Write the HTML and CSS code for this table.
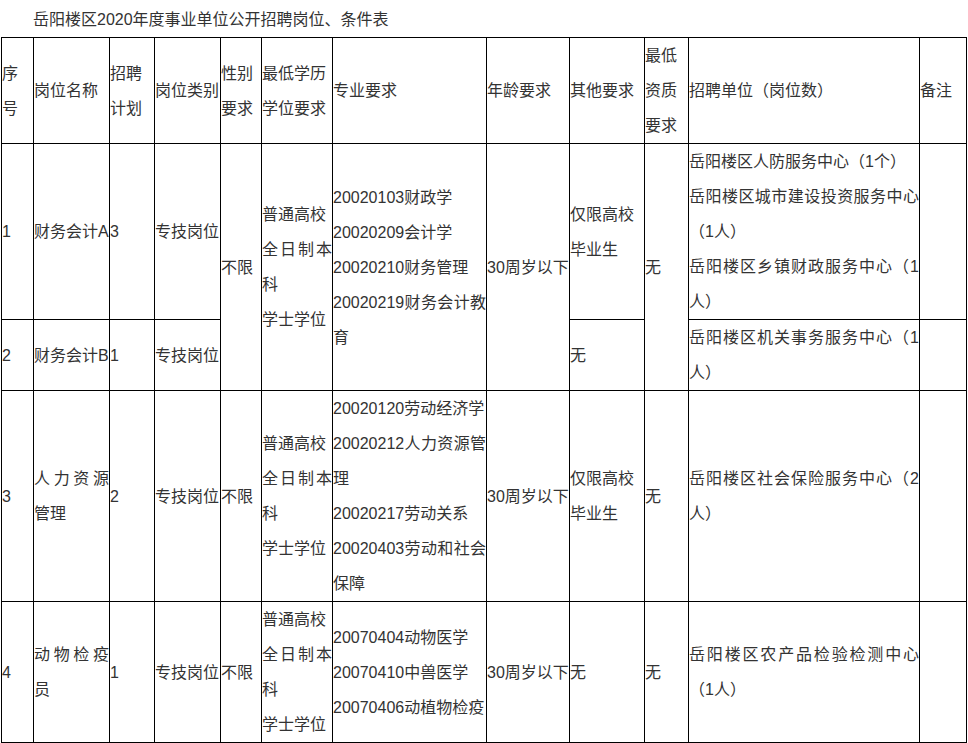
FILE: index.html
```html
<!DOCTYPE html>
<html lang="zh-CN">
<head>
<meta charset="utf-8">
<title>岳阳楼区2020年度事业单位公开招聘岗位、条件表</title>
<link rel="stylesheet" href="styles.css">
</head>
<body>
<div class="page">
  <p class="title">岳阳楼区2020年度事业单位公开招聘岗位、条件表</p>
  <table class="jobs">
    <colgroup>
      <col class="c1"><col class="c2"><col class="c3"><col class="c4"><col class="c5"><col class="c6">
      <col class="c7"><col class="c8"><col class="c9"><col class="c10"><col class="c11"><col class="c12">
    </colgroup>
    <tr>
      <td>序<br>号</td>
      <td>岗位名称</td>
      <td>招聘<br>计划</td>
      <td>岗位类别</td>
      <td>性别<br>要求</td>
      <td>最低学历<br>学位要求</td>
      <td>专业要求</td>
      <td>年龄要求</td>
      <td>其他要求</td>
      <td>最低<br>资质<br>要求</td>
      <td>招聘单位（岗位数）</td>
      <td>备注</td>
    </tr>
    <tr>
      <td>1</td>
      <td>财务会计A</td>
      <td>3</td>
      <td>专技岗位</td>
      <td rowspan="2">不限</td>
      <td rowspan="2">普通高校<br>全日制本科<br>学士学位</td>
      <td rowspan="2">20020103财政学<br>20020209会计学<br>20020210财务管理<br>20020219财务会计教育</td>
      <td rowspan="2">30周岁以下</td>
      <td>仅限高校<br>毕业生</td>
      <td rowspan="2">无</td>
      <td>岳阳楼区人防服务中心（1个）<br>岳阳楼区城市建设投资服务中心（1人）<br>岳阳楼区乡镇财政服务中心（1人）</td>
      <td></td>
    </tr>
    <tr>
      <td>2</td>
      <td>财务会计B</td>
      <td>1</td>
      <td>专技岗位</td>
      <td>无</td>
      <td>岳阳楼区机关事务服务中心（1人）</td>
      <td></td>
    </tr>
    <tr>
      <td>3</td>
      <td>人力资源管理</td>
      <td>2</td>
      <td>专技岗位</td>
      <td>不限</td>
      <td>普通高校<br>全日制本科<br>学士学位</td>
      <td>20020120劳动经济学<br>20020212人力资源管理<br>20020217劳动关系<br>20020403劳动和社会保障</td>
      <td>30周岁以下</td>
      <td>仅限高校<br>毕业生</td>
      <td>无</td>
      <td>岳阳楼区社会保险服务中心（2人）</td>
      <td></td>
    </tr>
    <tr>
      <td>4</td>
      <td>动物检疫员</td>
      <td>1</td>
      <td>专技岗位</td>
      <td>不限</td>
      <td>普通高校<br>全日制本科<br>学士学位</td>
      <td>20070404动物医学<br>20070410中兽医学<br>20070406动植物检疫</td>
      <td>30周岁以下</td>
      <td>无</td>
      <td>无</td>
      <td>岳阳楼区农产品检验检测中心（1人）</td>
      <td></td>
    </tr>
  </table>
</div>
</body>
</html>
```

FILE: styles.css
```css
html, body {
  margin: 0;
  padding: 0;
  background: #fff;
}

body {
  font-family: "Liberation Sans", "Noto Sans CJK SC", sans-serif;
  font-size: 16px;
  line-height: 35px;
  color: #333;
}

.page {
  padding: 2px 0 0 1px;
}

.title {
  margin: 0;
  text-indent: 32px;
}

.jobs {
  border-collapse: collapse;
  table-layout: fixed;
  width: 965px;
}

.jobs td {
  border: 1px solid #000;
  padding: 0;
  vertical-align: middle;
  text-align: justify;
  word-break: break-all;
}

.c1 { width: 32px; }
.c2 { width: 76px; }
.c3 { width: 45px; }
.c4 { width: 66px; }
.c5 { width: 41px; }
.c6 { width: 71px; }
.c7 { width: 154px; }
.c8 { width: 83px; }
.c9 { width: 75px; }
.c10 { width: 44px; }
.c11 { width: 231px; }
.c12 { width: 47px; }
```
